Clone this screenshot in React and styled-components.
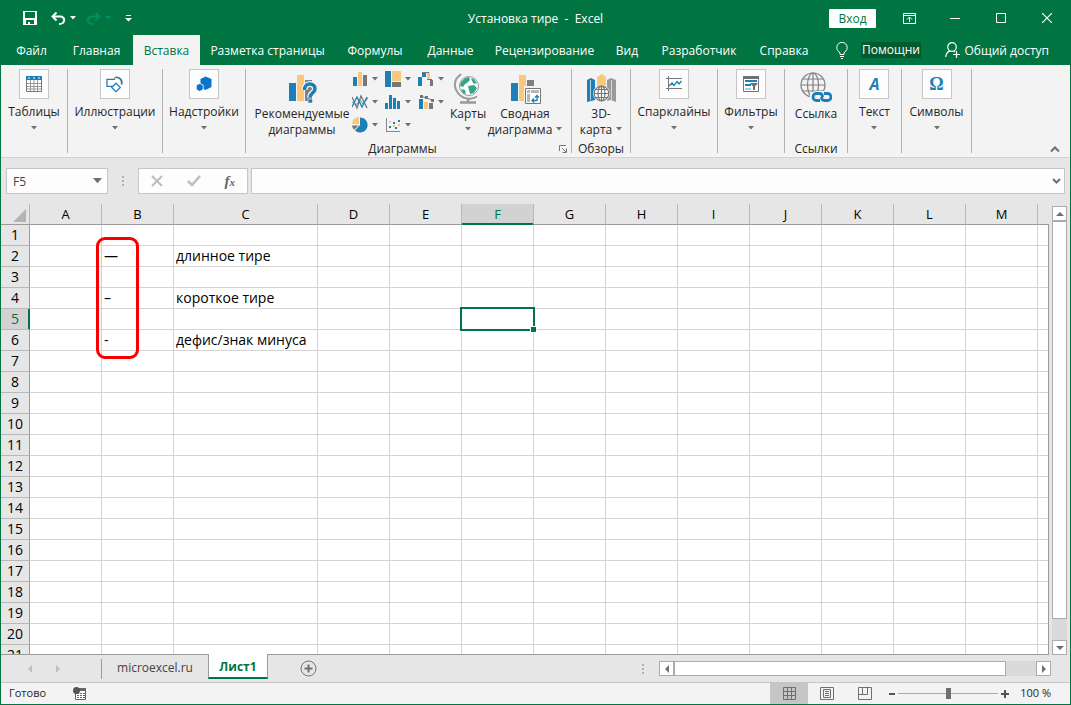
import { useState } from 'react'
import styled, { createGlobalStyle } from 'styled-components'

// Couleurs de l'application
const colors = {
   green: '#007542',
   darkGreen: '#045a2c',
   ribbon: '#f3f3f3',
   panel: '#e6e6e6',
   line: '#c6c6c6',
   grid: '#d4d4d4',
   edge: '#9b9b9b',
   icon: '#6f6f6f',
   blue: '#1d7fb9',
   orange: '#fbc77b',
   teal: '#35a58a',
   text: '#262626',
}

const GlobalStyle = createGlobalStyle`
   * {
      box-sizing: border-box;
   }
   body {
      margin: 0;
      font-family: 'Open Sans', 'Noto Sans', sans-serif;
      font-size: 12px;
      color: ${colors.text};
   }
   button, input {
      font: inherit;
      color: inherit;
      padding: 0;
      border: none;
      background: none;
   }
   svg {
      display: block;
      flex: none;
   }
`

// Fenêtre principale
const Window = styled.div`
   display: flex;
   flex-direction: column;
   height: 100vh;
   border: 1px solid ${colors.green};
   background-color: ${colors.panel};
   overflow: hidden;
`

// Barre de titre
const TitleBar = styled.header`
   display: grid;
   grid-template-columns: 1fr auto 1fr;
   align-items: center;
   flex: none;
   height: 34px;
   color: white;
   background-color: ${colors.green};
`

const QuickAccess = styled.div`
   display: flex;
   align-items: center;
   padding-left: 22px;
`

const QuickButton = styled.button`
   display: flex;
   align-items: center;
   gap: 4px;
   margin-right: ${({ $gap }) => $gap || 10}px;
   color: ${({ disabled }) => (disabled ? '#008e63' : 'white')};
`

const WindowTitle = styled.h1`
   margin: 0;
   font-size: 12px;
   font-weight: 400;
   white-space: pre;
`

const WindowControls = styled.div`
   display: flex;
   align-items: center;
   justify-content: flex-end;
`

const LoginButton = styled.button`
   width: 47px;
   height: 19px;
   margin-right: 10px;
   line-height: 19px;
   border-radius: 1px;
   color: ${colors.green};
   background-color: white;
`

const ControlButton = styled.button`
   display: flex;
   align-items: center;
   justify-content: center;
   width: 46px;
   height: 30px;
`

// Onglets du ruban
const TabBar = styled.nav`
   display: flex;
   align-items: stretch;
   flex: none;
   height: 30px;
   padding-left: 2px;
   color: white;
   background-color: ${colors.green};
`

const Tab = styled.button`
   flex: none;
   width: ${({ $width }) => $width}px;
   white-space: nowrap;
   color: ${({ $active }) => ($active ? colors.green : 'white')};
   background-color: ${({ $active }) => ($active ? colors.ribbon : 'transparent')};
`

const Helper = styled.button`
   display: flex;
   align-items: center;
   gap: 13px;
   margin-left: 15px;
   white-space: nowrap;
`

const HelperText = styled.span`
   height: 16px;
   line-height: 16px;
   padding: 0 1px;
   background-color: ${colors.darkGreen};
`

const Share = styled.button`
   display: flex;
   align-items: center;
   gap: 3px;
   margin-left: auto;
   padding-right: 21px;
   white-space: nowrap;
`

// Ruban
const RibbonBar = styled.section`
   display: flex;
   flex: none;
   height: 93px;
   border-bottom: 1px solid #d2d2d2;
   background-color: ${colors.ribbon};
`

const Group = styled.div`
   display: flex;
   flex-direction: column;
   flex: none;
   width: ${({ $width }) => $width}px;
   padding-right: 1px;
   position: relative;

   &::after {
      content: '';
      position: absolute;
      right: 0;
      top: 4px;
      bottom: 4px;
      width: 1px;
      background-color: #b1b1b1;
   }
`

const GroupBody = styled.div`
   display: flex;
   justify-content: center;
   flex: 1;
`

const GroupFooter = styled.div`
   display: flex;
   align-items: center;
   height: 16px;
   padding-right: ${({ $launcher }) => ($launcher ? 4 : 0)}px;
   line-height: 16px;
`

const GroupTitle = styled.span`
   flex: 1;
   text-align: center;
   white-space: nowrap;
`

const BoxButton = styled.button`
   display: flex;
   flex-direction: column;
   align-items: center;
   padding-top: 4px;
   line-height: 16px;
   white-space: nowrap;
`

const IconBox = styled.span`
   display: flex;
   align-items: center;
   justify-content: center;
   width: 30px;
   height: 30px;
   margin-bottom: 5px;
   border: 1px solid ${colors.line};
   background-color: #fdfdfd;
`

const BoxArrow = styled.span`
   margin-top: 6px;
`

const LargeButton = styled.button`
   display: flex;
   flex-direction: column;
   align-items: center;
   flex: none;
   width: ${({ $width }) => $width}px;
   padding-top: 7px;
   line-height: 16px;
   white-space: nowrap;

   svg:first-child {
      margin-bottom: 2px;
   }
`

const ArrowLine = styled.span`
   display: flex;
   align-items: center;
   gap: 4px;
   height: 16px;
`

const LetterIcon = styled.span`
   font-family: ${({ $serif }) => ($serif ? "'Liberation Serif', serif" : "'Open Sans', sans-serif")};
   font-size: ${({ $serif }) => ($serif ? 18 : 16)}px;
   font-weight: 700;
   font-style: ${({ $serif }) => ($serif ? 'normal' : 'italic')};
   color: ${colors.blue};
`

const Gallery = styled.div`
   display: grid;
   grid-template-columns: repeat(3, 33px);
   grid-auto-rows: 23px;
   padding-top: 2px;
`

const GalleryButton = styled.button`
   display: flex;
   align-items: center;
   gap: 4px;
`

const Collapse = styled.button`
   align-self: flex-end;
   margin-left: auto;
   padding: 0 10px 4px;
`

// Barre de formule
const FormulaBar = styled.section`
   display: flex;
   align-items: center;
   flex: none;
   height: 46px;
   padding: 0 5px;
`

const Field = styled.div`
   display: flex;
   align-items: center;
   height: 26px;
   border: 1px solid ${colors.line};
   background-color: #fdfdfd;
`

const NameField = styled(Field)`
   width: 102px;
   padding: 0 5px 0 6px;

   input {
      flex: 1;
      min-width: 0;
      color: #444;
      outline: none;
   }
`

const FormulaActions = styled(Field)`
   width: 110px;
   justify-content: space-between;
   padding: 0 12px;
   margin-right: 3px;
`

const FormulaField = styled(Field)`
   flex: 1;
   padding: 0 3px;

   input {
      flex: 1;
      min-width: 0;
      outline: none;
   }
`

const Fx = styled.span`
   font-family: 'Liberation Serif', serif;
   font-size: 15px;
   font-style: italic;
   font-weight: 700;
   color: #666;

   small {
      font-size: 11px;
   }
`

const Dots = styled.span`
   display: flex;
   flex-direction: column;
   gap: 2px;
   margin: 0 ${({ $side }) => $side}px;

   i {
      width: 2px;
      height: 2px;
      background-color: #b0b0b0;
   }
`

// Feuille de calcul
const SheetArea = styled.main`
   display: flex;
   flex: 1;
   min-height: 0;
`

const Viewport = styled.div`
   flex: 1;
   min-width: 0;
   position: relative;
   overflow: hidden;
   border-bottom: 1px solid ${colors.edge};

   &::after {
      content: '';
      position: absolute;
      top: 21px;
      right: 0;
      bottom: 0;
      width: 1px;
      background-color: ${colors.edge};
   }
`

const Table = styled.table`
   width: 0;
   table-layout: fixed;
   border-collapse: separate;
   border-spacing: 0;
   font-size: 14px;
   line-height: 20px;
   color: black;
   background-color: white;
`

const Col = styled.col`
   width: ${({ $width }) => $width}px;
`

const ColumnHead = styled.th`
   height: 21px;
   padding: 0;
   font-size: 13px;
   font-weight: 400;
   color: ${({ $active }) => ($active ? colors.green : 'black')};
   background-color: ${({ $active }) => ($active ? '#d2d2d2' : colors.panel)};
   border-right: 1px solid #b8b8b8;
   border-bottom: 1px solid ${({ $active }) => ($active ? colors.green : colors.edge)};
   box-shadow: ${({ $active }) => ($active ? `inset 0 -1px ${colors.green}` : 'none')};
`

const Corner = styled(ColumnHead)`
   svg {
      margin: 3px 3px 0 auto;
   }
`

const RowHead = styled.th`
   height: 21px;
   padding: 0;
   font-weight: 400;
   color: ${({ $active }) => ($active ? colors.green : 'black')};
   background-color: ${({ $active }) => ($active ? '#d2d2d2' : colors.panel)};
   border-right: 1px solid ${({ $active }) => ($active ? colors.green : colors.edge)};
   border-bottom: 1px solid #b8b8b8;
   box-shadow: ${({ $active }) => ($active ? `inset -1px 0 ${colors.green}` : 'none')};
`

const Cell = styled.td`
   position: relative;
   padding: 0 2px;
   white-space: nowrap;
   border-right: 1px solid ${colors.grid};
   border-bottom: 1px solid ${colors.grid};
`

// Cadre de la cellule sélectionnée
const Selection = styled.span`
   position: absolute;
   z-index: 1;
   top: -2px;
   left: -2px;
   right: -2px;
   bottom: -2px;
   border: 2px solid ${colors.green};

   &::after {
      content: '';
      position: absolute;
      right: -3px;
      bottom: -3px;
      width: 5px;
      height: 5px;
      background-color: ${colors.green};
      box-shadow: 0 0 0 1px white;
   }
`

// Cadre rouge autour des tirets
const Highlight = styled.div`
   position: absolute;
   left: 95px;
   top: 33px;
   width: 43px;
   height: 122px;
   border: 3px solid #f80000;
   border-radius: 9px;
   pointer-events: none;
`

const VerticalScroll = styled.div`
   display: flex;
   flex-direction: column;
   flex: none;
   width: 15px;
   margin: 2px 3px 0;
   background-color: #dadada;
`

const HorizontalScroll = styled.div`
   display: flex;
   width: 392px;
   height: 15px;
   background-color: #dadada;
`

const ScrollButton = styled.button`
   display: flex;
   align-items: center;
   justify-content: center;
   flex: none;
   width: 15px;
   height: 15px;
   border: 1px solid #ababab;
   background-color: white;
`

const Thumb = styled.div`
   flex: ${({ $size }) => $size};
   border: 1px solid #ababab;
   background-color: white;
`

const Track = styled.div`
   flex: ${({ $size }) => $size};
`

// Onglets des feuilles
const SheetBar = styled.nav`
   display: flex;
   align-items: center;
   flex: none;
   height: 27px;
   padding-right: 19px;
`

const SheetArrows = styled.div`
   display: flex;
   align-items: center;
   gap: 20px;
   width: 101px;
   height: 20px;
   padding-left: 25px;
   border-right: 1px solid ${colors.edge};
`

const SheetTab = styled.button`
   position: relative;
   align-self: flex-start;
   width: 106px;
   height: 24px;
   color: #444;
`

const ActiveSheetTab = styled(SheetTab)`
   width: 60px;
   height: 25px;
   margin-top: -1px;
   padding-top: 2px;
   font-weight: 700;
   color: ${colors.green};
   background-color: white;
   border: solid ${colors.edge};
   border-width: 0 1px;
   border-bottom: 2px solid ${colors.green};
`

const AddSheet = styled.button`
   margin-left: 32px;
   margin-right: auto;
`

// Barre d'état
const StatusBar = styled.footer`
   display: flex;
   align-items: center;
   flex: none;
   height: 22px;
   padding-left: 8px;
   padding-right: 19px;
   font-size: 11px;
   border-top: 1px solid ${colors.line};
   background-color: ${colors.ribbon};
`

const StatusText = styled.span`
   padding-bottom: 2px;
   white-space: nowrap;
`

const MacroButton = styled.button`
   margin-left: 27px;
   margin-right: auto;
`

const ViewButton = styled.button`
   display: flex;
   align-items: center;
   justify-content: center;
   width: 38px;
   height: 21px;
   background-color: ${({ $active }) => ($active ? colors.line : 'transparent')};
`

const ZoomControl = styled.div`
   display: flex;
   align-items: center;
   gap: 2px;
   padding-left: 4px;
`

const ZoomSlider = styled.input`
   appearance: none;
   width: 100px;
   height: 12px;
   margin: 0;
   background: linear-gradient(#ababab, #ababab) center / 100% 1px no-repeat;

   &::-webkit-slider-thumb {
      appearance: none;
      width: 5px;
      height: 11px;
      background-color: ${colors.icon};
   }
`

const ZoomValue = styled(StatusText)`
   width: 41px;
   text-align: right;
`

// Petite flèche des menus
function Arrow({ color = colors.icon, large }) {
   return (
      <svg width={large ? 9 : 6} height={large ? 6 : 4} viewBox="0 0 6 4">
         <path d="M0 0h6L3 3.5z" fill={color} />
      </svg>
   )
}

function ScrollArrow({ angle = 0, color = colors.icon }) {
   return (
      <svg width="8" height="8" viewBox="0 0 8 8">
         <path d="M0 6h8L4 2z" fill={color} transform={`rotate(${angle} 4 4)`} />
      </svg>
   )
}

function SaveIcon() {
   return (
      <svg width="14" height="14" viewBox="0 0 14 14">
         <path d="M0 0h14v14H0z M2 1v6h10V1z M3 9v4h2v-2h2v2h4V9z" fill="currentColor" fillRule="evenodd" />
      </svg>
   )
}

function UndoIcon({ flip }) {
   return (
      <svg width="15" height="13" viewBox="0 0 15 13">
         <g transform={flip ? 'matrix(-1 0 0 1 15 0)' : undefined} fill="none" stroke="currentColor" strokeWidth="2">
            <path d="M5.5 .5L1.5 4.5l4 4M1.5 4.5H9c6 0 5.500 7.500-1 7.500" />
         </g>
      </svg>
   )
}

function CustomizeIcon() {
   return (
      <svg width="7" height="7" viewBox="0 0 7 7">
         <path d="M1 0h5v1H1zM0 3h7L3.500 6.500z" fill="currentColor" />
      </svg>
   )
}

function RibbonDisplayIcon() {
   return (
      <svg width="13" height="11" viewBox="0 0 13 11" fill="none" stroke="white">
         <path d="M.5.5h12v10H.5zM.5 2.500h12M6.500 9V4.500M4 6.500l2.500-2.500L9 6.500" />
      </svg>
   )
}

function BulbIcon() {
   return (
      <svg width="12" height="17" viewBox="0 0 12 17" fill="none" stroke="white">
         <path d="M4 12.500V11C3 9.500.8 8.500.8 5.500a5.200 5.200 0 0 1 10.400 0C11.200 8.500 9 9.500 8 11v1.500zM4 14.500h4M5 16.500h2" />
      </svg>
   )
}

function ShareIcon() {
   return (
      <svg width="16" height="16" viewBox="0 0 16 16" fill="none" stroke="white" strokeWidth="1.200">
         <circle cx="7" cy="5" r="4.300" />
         <path d="M.7 15c.3-3 2-5.500 4.600-6.200M8.500 9.200l1.500.8M8 12.500h7M11.500 9v7" />
      </svg>
   )
}

function TableIcon() {
   return (
      <svg width="16" height="16" viewBox="0 0 16 16">
         <path d="M.5 1h15v14.500H.5z" fill="white" stroke="#777" />
         <path d="M0 0h16v4H0z" fill={colors.blue} />
         <path d="M2 2h2M7 2h2M12 2h2" stroke="white" />
         <path d="M1 7.500h14M1 10.500h14M1 13h14M4.500 4v11M8 4v11M11.500 4v11" stroke="#999" />
      </svg>
   )
}

function ShapesIcon() {
   return (
      <svg width="17" height="17" viewBox="0 0 17 17" fill="none" stroke={colors.blue} strokeWidth="1.300">
         <path d="M7 10.300H1V3.300h8" />
         <path d="M8 2.500a5 5 0 0 1 7.500 6.300" stroke="#888" />
         <path d="M9.800 1.500a5 5 0 0 1 5.500 6.500" />
         <path d="M10 7.200l4.300 4.200-4.300 4.200-4.300-4.200z" fill="white" />
      </svg>
   )
}

function AddinsIcon() {
   return (
      <svg width="16" height="16" viewBox="0 0 16 16" fill="#0a74cc">
         <path d="M9.500.5L15.500 3v8L9.500 14 4.500 11.500V3z" />
         <path d="M3.700 7.500L7.200 9v4.500L3.700 15.500.3 13.500V9z" stroke="white" strokeWidth=".8" />
      </svg>
   )
}

function RecommendedIcon() {
   return (
      <svg width="32" height="32" viewBox="0 0 32 32">
         <path d="M3 11h7v18H3z" fill={colors.blue} />
         <path d="M11 3h7v26h-7z" fill={colors.orange} />
         <path d="M19 8h7v21h-7z" fill="#808080" />
         <path d="M18.500 18c0-8 10.500-7.500 10.500-1.300 0 4.300-5 4.300-5 8.800" fill="none" stroke={colors.ribbon} strokeWidth="6" />
         <path d="M18.500 18c0-8 10.500-7.500 10.500-1.300 0 4.300-5 4.300-5 8.800" fill="none" stroke={colors.blue} strokeWidth="3.500" />
         <path d="M22 27h4.500v4H22z" fill={colors.blue} stroke={colors.ribbon} strokeWidth=".6" />
      </svg>
   )
}

function GlobeStandIcon() {
   return (
      <svg width="32" height="32" viewBox="0 0 32 32">
         <circle cx="17" cy="14" r="9.500" fill="white" stroke="#999" />
         <path d="M9 10l4-4 4-1 1 3-3 3-2 1-2 3-3-1zM19 6l3 1 3 4-3 1-2-3zM16 14l6-1 3 3-3 5-4 1-1-4zM9 17l4 1 1 4-3-1z" fill={colors.teal} />
         <path d="M9 2L4.500 6.500C0 15 6 25 15 26.500c4 .8 7 0 10-2" fill="none" stroke="#999" strokeWidth="2" />
         <path d="M16 26v4M8 30.500h16" stroke="#999" strokeWidth="2.500" />
      </svg>
   )
}

function PivotChartIcon() {
   return (
      <svg width="32" height="32" viewBox="0 0 32 32">
         <path d="M2 11h7v18H2z" fill={colors.blue} />
         <path d="M10 3h7v26h-7z" fill={colors.orange} />
         <path d="M18 8h7v8h-7z" fill="#808080" />
         <path d="M15 14h18v18H15z" fill={colors.ribbon} />
         <path d="M16.500 16.500h15v15h-15z" fill="white" stroke="#777" />
         <path d="M18 18h3v3h-3zM22 18h8v3h-8zM18 22h3v8h-3z" fill="#b5b5b5" />
         <path d="M28 24v4.500h-5M26 25.500l2-2 2 2M25 26.500l-2 2 2 2" fill="none" stroke={colors.blue} strokeWidth="1.300" />
      </svg>
   )
}

function MapIcon() {
   return (
      <svg width="32" height="32" viewBox="0 0 32 32">
         <path d="M2 8l4-2 4 2v20l-4 1-4 1z" fill={colors.blue} />
         <path d="M12 5l5-3 4 3v20h-9z" fill={colors.orange} />
         <path d="M22 8l4-2 5 2v22l-5-2-4 1z" fill="#999" />
         <path d="M5.500 8v20M26.500 8v20" stroke={colors.ribbon} strokeWidth=".7" />
         <circle cx="16.500" cy="21.500" r="8.500" fill={colors.ribbon} />
         <g fill="none" stroke="#777" strokeWidth="1.200">
            <circle cx="16.500" cy="21.500" r="7.300" fill="white" />
            <ellipse cx="16.500" cy="21.500" rx="3.500" ry="7.300" />
            <path d="M9 21.500h15M10.500 17.500h12M10.500 25.500h12M16.500 14v15" />
         </g>
      </svg>
   )
}

function SparklineIcon() {
   return (
      <svg width="16" height="16" viewBox="0 0 16 16" fill="none">
         <path d="M2.500 0v15M0 2.500h16M0 12.500h16" stroke="#777" />
         <path d="M3 10l3-3 2 2.500L11 5.500l2 2.500 2.500-3" stroke={colors.blue} strokeWidth="1.300" />
      </svg>
   )
}

function FilterIcon() {
   return (
      <svg width="16" height="16" viewBox="0 0 16 16">
         <path d="M.5.5h15v15H.5z" fill="white" stroke="#777" />
         <path d="M0 0h16v3H0z" fill="#707070" />
         <path d="M2 5h12" stroke={colors.blue} strokeWidth="2" />
         <path d="M2 9h6" stroke={colors.blue} strokeWidth="2" />
         <path d="M2 13h6" stroke="#a9cfe6" strokeWidth="2" />
         <path d="M7 7h8l-3 3.500V14h-2v-3.500z" fill="#707070" />
      </svg>
   )
}

function LinkIcon() {
   return (
      <svg width="32" height="32" viewBox="0 0 32 32" fill="none">
         <g stroke="#808080" strokeWidth="1.200">
            <circle cx="13" cy="13" r="12" />
            <ellipse cx="13" cy="13" rx="5.500" ry="12" />
            <path d="M1 13h24M13 1v24M3 7h20M3 19h20" />
         </g>
         <path d="M16 22h13a3 3 0 0 1 0 7H16a3 3 0 0 1 0-7z" stroke={colors.ribbon} strokeWidth="6" />
         <path d="M20 28.500h-3.500a3.500 3.500 0 0 1 0-7h3c2 0 3 1.500 3 3.500M24 21.500h3.500a3.500 3.500 0 0 1 0 7h-3c-2 0-3-1.500-3-3.500" stroke={colors.blue} strokeWidth="2.800" />
      </svg>
   )
}

// Icônes de la galerie de diagrammes
const galleryIcons = {
   column: (
      <>
         <path d="M1 6h4v9H1z" fill={colors.blue} />
         <path d="M6 1h4v14H6z" fill={colors.orange} />
         <path d="M11 4h4v11h-4z" fill="#777" />
      </>
   ),
   hierarchy: (
      <>
         <path d="M0 0h6v16H0z" fill={colors.blue} />
         <path d="M7 0h9v10H7z" fill={colors.orange} />
         <path d="M7 11h9v5H7z" fill="#777" />
      </>
   ),
   waterfall: (
      <>
         <path d="M0 6h4v9H0zM4 1h4v5H4z" fill={colors.blue} />
         <path d="M9 1h3v7H9z" fill={colors.orange} />
         <path d="M12 9h3v6h-3z" fill="#777" />
         <path d="M4 1.500h7M9 8.500h5" stroke="#777" />
      </>
   ),
   line: (
      <g fill="none" strokeWidth="1.300">
         <path d="M0 13L5 3l5 10 5-10" stroke={colors.blue} />
         <path d="M0 3l5 11L9 2l6 12" stroke="#777" />
         <path d="M0 8l4 3 4-5 3 4 5-6" stroke={colors.blue} strokeWidth=".8" />
      </g>
   ),
   statistic: <path d="M0 9h3v6H0zM4 1h3v14H4zM8 4h3v11H8zM12 7h3v8h-3z" fill={colors.blue} />,
   combo: (
      <>
         <path d="M1 5h4v10H1z" fill={colors.blue} />
         <path d="M6 8h4v7H6z" fill={colors.orange} />
         <path d="M11 9h4v6h-4z" fill="#777" />
         <path d="M3 2l5 2 6 2" stroke="#777" fill="none" />
         <path d="M2 1h3v3H2zM7 2h3v3H7zM13 5h3v3h-3z" fill="#777" />
      </>
   ),
   pie: (
      <>
         <path d="M8 8V.5a7.500 7.500 0 1 1-5 13z" fill={colors.blue} />
         <path d="M7 7H0A7 7 0 0 1 7 0z" fill={colors.orange} />
         <path d="M6.500 8.500l-4.300 4.300A7 7 0 0 1 0 8.500z" fill="#777" />
      </>
   ),
   scatter: (
      <>
         <path d="M1.500 1v14M1 14.500h14" stroke="#888" fill="none" />
         <path d="M4 9h2v2H4zM8 5h2v2H8zM10 10h2v2h-2zM13 3h2v2h-2z" fill={colors.blue} />
         <path d="M4 4h2v2H4zM8 8h2v2H8zM13 7h2v2h-2z" fill={colors.orange} />
      </>
   ),
}

const ribbonTabs = [
   ['Файл', 57],
   ['Главная', 73],
   ['Вставка', 67],
   ['Разметка страницы', 135],
   ['Формулы', 80],
   ['Данные', 71],
   ['Рецензирование', 117],
   ['Вид', 48],
   ['Разработчик', 96],
   ['Справка', 74],
]

const galleryItems = [
   ['column', 'Гистограмма'],
   ['hierarchy', 'Иерархическая'],
   ['waterfall', 'Каскадная'],
   ['line', 'График'],
   ['statistic', 'Статистическая'],
   ['combo', 'Комбинированная'],
   ['pie', 'Круговая'],
   ['scatter', 'Точечная'],
]

// Colonnes, lignes et contenu de la feuille
const columns = [...'ABCDEFGHIJKLM', ''].map((name) => ({
   name,
   width: name === 'C' ? 144 : 72,
}))
const rows = Array.from({ length: 21 }, (_, i) => i + 1)
const cells = {
   B2: '—',
   C2: 'длинное тире',
   B4: '–',
   C4: 'короткое тире',
   B6: '-',
   C6: 'дефис/знак минуса',
}

function BoxGroup({ width, label, children }) {
   return (
      <Group $width={width}>
         <GroupBody>
            <BoxButton>
               <IconBox>{children}</IconBox>
               {label}
               <BoxArrow>
                  <Arrow />
               </BoxArrow>
            </BoxButton>
         </GroupBody>
      </Group>
   )
}

function Ribbon() {
   return (
      <RibbonBar>
         <BoxGroup width={67} label="Таблицы">
            <TableIcon />
         </BoxGroup>
         <BoxGroup width={95} label="Иллюстрации">
            <ShapesIcon />
         </BoxGroup>
         <BoxGroup width={83} label="Надстройки">
            <AddinsIcon />
         </BoxGroup>
         <Group $width={326}>
            <GroupBody>
               <LargeButton $width={100}>
                  <RecommendedIcon />
                  <span>Рекомендуемые</span>
                  <span>диаграммы</span>
               </LargeButton>
               <Gallery>
                  {galleryItems.map(([icon, label]) => (
                     <GalleryButton key={icon} aria-label={label}>
                        <svg width="16" height="16" viewBox="0 0 16 16">
                           {galleryIcons[icon]}
                        </svg>
                        <Arrow />
                     </GalleryButton>
                  ))}
               </Gallery>
               <LargeButton $width={34}>
                  <GlobeStandIcon />
                  <span>Карты</span>
                  <ArrowLine>
                     <Arrow />
                  </ArrowLine>
               </LargeButton>
               <LargeButton $width={80}>
                  <PivotChartIcon />
                  <span>Сводная</span>
                  <ArrowLine>
                     диаграмма <Arrow />
                  </ArrowLine>
               </LargeButton>
            </GroupBody>
            <GroupFooter $launcher>
               <GroupTitle>Диаграммы</GroupTitle>
               <button aria-label="Параметры диаграмм">
                  <svg width="8" height="8" viewBox="0 0 8 8" fill="none" stroke="#777">
                     <path d="M.5 6V.5H7M3 3l4 4M7.500 3.500v4h-4" />
                  </svg>
               </button>
            </GroupFooter>
         </Group>
         <Group $width={59}>
            <GroupBody>
               <LargeButton $width={58}>
                  <MapIcon />
                  <span>3D-</span>
                  <ArrowLine>
                     карта <Arrow />
                  </ArrowLine>
               </LargeButton>
            </GroupBody>
            <GroupFooter>
               <GroupTitle>Обзоры</GroupTitle>
            </GroupFooter>
         </Group>
         <BoxGroup width={87} label="Спарклайны">
            <SparklineIcon />
         </BoxGroup>
         <BoxGroup width={67} label="Фильтры">
            <FilterIcon />
         </BoxGroup>
         <Group $width={63}>
            <GroupBody>
               <LargeButton $width={62}>
                  <LinkIcon />
                  <span>Ссылка</span>
               </LargeButton>
            </GroupBody>
            <GroupFooter>
               <GroupTitle>Ссылки</GroupTitle>
            </GroupFooter>
         </Group>
         <BoxGroup width={54} label="Текст">
            <LetterIcon>A</LetterIcon>
         </BoxGroup>
         <BoxGroup width={70} label="Символы">
            <LetterIcon $serif>Ω</LetterIcon>
         </BoxGroup>
         <Collapse aria-label="Свернуть ленту">
            <svg width="10" height="7" viewBox="0 0 10 7" fill="none" stroke={colors.icon} strokeWidth="2">
               <path d="M1 5.500l4-4 4 4" />
            </svg>
         </Collapse>
      </RibbonBar>
   )
}

function Sheet() {
   return (
      <SheetArea>
         <Viewport>
            <Table>
               <colgroup>
                  <Col $width={29} />
                  {columns.map(({ name, width }) => (
                     <Col key={name} $width={width} />
                  ))}
               </colgroup>
               <thead>
                  <tr>
                     <Corner>
                        <svg width="13" height="13" viewBox="0 0 13 13">
                           <path d="M13 0v13H0z" fill="#b4b4b4" />
                        </svg>
                     </Corner>
                     {columns.map(({ name }) => (
                        <ColumnHead key={name} scope="col" $active={name === 'F'}>
                           {name}
                        </ColumnHead>
                     ))}
                  </tr>
               </thead>
               <tbody>
                  {rows.map((row) => (
                     <tr key={row}>
                        <RowHead scope="row" $active={row === 5}>
                           {row}
                        </RowHead>
                        {columns.map(({ name }) => (
                           <Cell key={name}>
                              {cells[name + row]}
                              {name + row === 'F5' && <Selection />}
                           </Cell>
                        ))}
                     </tr>
                  ))}
               </tbody>
            </Table>
            <Highlight />
         </Viewport>
         <VerticalScroll>
            <ScrollButton aria-label="Вверх">
               <ScrollArrow />
            </ScrollButton>
            <Thumb $size={398} />
            <Track $size={21} />
            <ScrollButton aria-label="Вниз">
               <ScrollArrow angle={180} />
            </ScrollButton>
         </VerticalScroll>
      </SheetArea>
   )
}

function App() {
   const [zoom, setZoom] = useState(100)
   const [formula, setFormula] = useState('')

   return (
      <Window>
         <GlobalStyle />
         <TitleBar>
            <QuickAccess>
               <QuickButton $gap={14} aria-label="Сохранить">
                  <SaveIcon />
               </QuickButton>
               <QuickButton aria-label="Отменить">
                  <UndoIcon />
                  <Arrow color="currentColor" />
               </QuickButton>
               <QuickButton $gap={14} disabled aria-label="Вернуть">
                  <UndoIcon flip />
                  <Arrow color="currentColor" />
               </QuickButton>
               <QuickButton aria-label="Настройка панели">
                  <CustomizeIcon />
               </QuickButton>
            </QuickAccess>
            <WindowTitle>{'Установка тире  -  Excel'}</WindowTitle>
            <WindowControls>
               <LoginButton>Вход</LoginButton>
               <ControlButton aria-label="Параметры ленты">
                  <RibbonDisplayIcon />
               </ControlButton>
               <ControlButton aria-label="Свернуть">
                  <svg width="10" height="10" viewBox="0 0 10 10" stroke="white">
                     <path d="M0 5.500h10" />
                  </svg>
               </ControlButton>
               <ControlButton aria-label="Развернуть">
                  <svg width="10" height="10" viewBox="0 0 10 10" fill="none" stroke="white">
                     <path d="M.5.5h9v9h-9z" />
                  </svg>
               </ControlButton>
               <ControlButton aria-label="Закрыть">
                  <svg width="10" height="10" viewBox="0 0 10 10" stroke="white" strokeWidth="1.200">
                     <path d="M0 0l10 10M10 0L0 10" />
                  </svg>
               </ControlButton>
            </WindowControls>
         </TitleBar>
         <TabBar>
            {ribbonTabs.map(([name, width]) => (
               <Tab key={name} $width={width} $active={name === 'Вставка'}>
                  {name}
               </Tab>
            ))}
            <Helper>
               <BulbIcon />
               <HelperText>Помощни</HelperText>
            </Helper>
            <Share>
               <ShareIcon />
               Общий доступ
            </Share>
         </TabBar>
         <Ribbon />
         <FormulaBar>
            <NameField>
               <input aria-label="Имя ячейки" defaultValue="F5" />
               <button aria-label="Список имён">
                  <Arrow large />
               </button>
            </NameField>
            <Dots $side={14}>
               <i />
               <i />
               <i />
            </Dots>
            <FormulaActions>
               <button aria-label="Отмена">
                  <svg width="12" height="12" viewBox="0 0 12 12" stroke="#bdbdbd" strokeWidth="2">
                     <path d="M1 1l10 10M11 1L1 11" />
                  </svg>
               </button>
               <button aria-label="Ввод">
                  <svg width="14" height="12" viewBox="0 0 14 12" fill="none" stroke="#bdbdbd" strokeWidth="2.500">
                     <path d="M1 6l4 4 8-9" />
                  </svg>
               </button>
               <button aria-label="Вставить функцию">
                  <Fx>
                     f<small>x</small>
                  </Fx>
               </button>
            </FormulaActions>
            <FormulaField>
               <input aria-label="Строка формул" value={formula} onChange={(e) => setFormula(e.target.value)} />
               <button aria-label="Развернуть строку формул">
                  <svg width="9" height="6" viewBox="0 0 9 6" fill="none" stroke={colors.icon} strokeWidth="2">
                     <path d="M1 1l3.500 3.500L8 1" />
                  </svg>
               </button>
            </FormulaField>
         </FormulaBar>
         <Sheet />
         <SheetBar>
            <SheetArrows>
               <button aria-label="Предыдущий лист">
                  <ScrollArrow angle={-90} color="#bdbdbd" />
               </button>
               <button aria-label="Следующий лист">
                  <ScrollArrow angle={90} color="#bdbdbd" />
               </button>
            </SheetArrows>
            <SheetTab>microexcel.ru</SheetTab>
            <ActiveSheetTab>Лист1</ActiveSheetTab>
            <AddSheet aria-label="Новый лист">
               <svg width="17" height="17" viewBox="0 0 17 17" fill="none" stroke={colors.icon}>
                  <circle cx="8.500" cy="8.500" r="7.500" />
                  <path d="M4.500 8.500h8M8.500 4.500v8" strokeWidth="2" />
               </svg>
            </AddSheet>
            <Dots $side={15}>
               <i />
               <i />
               <i />
            </Dots>
            <HorizontalScroll>
               <ScrollButton aria-label="Влево">
                  <ScrollArrow angle={-90} />
               </ScrollButton>
               <Thumb $size={332} />
               <Track $size={30} />
               <ScrollButton aria-label="Вправо">
                  <ScrollArrow angle={90} />
               </ScrollButton>
            </HorizontalScroll>
         </SheetBar>
         <StatusBar>
            <StatusText>Готово</StatusText>
            <MacroButton aria-label="Запись макроса">
               <svg width="14" height="13" viewBox="0 0 14 13">
                  <path d="M2.500 5v7.500h10V1.500H6" fill="white" stroke="#666" />
                  <path d="M6 1h7v3H6z" fill="#666" />
                  <path d="M4 6.500h8M4 8.500h8M4 10.500h8" stroke="#666" strokeDasharray="2 1" />
                  <circle cx="3.500" cy="3.500" r="3.500" fill="#555" />
               </svg>
            </MacroButton>
            <ViewButton $active aria-label="Обычный">
               <svg width="13" height="13" viewBox="0 0 13 13" fill="none" stroke={colors.icon}>
                  <path d="M.5.5h12v12H.5zM.5 4.500h12M.5 8.500h12M4.500.5v12M8.500.5v12" />
               </svg>
            </ViewButton>
            <ViewButton aria-label="Разметка страницы">
               <svg width="14" height="13" viewBox="0 0 14 13" fill="none" stroke={colors.icon}>
                  <path d="M.5.5h13v12H.5zM3.500 2.500h7v8h-7zM5 4.500h4M5 6.500h4M5 8.500h4" />
               </svg>
            </ViewButton>
            <ViewButton aria-label="Страничный">
               <svg width="14" height="13" viewBox="0 0 14 13" fill="none" stroke={colors.icon}>
                  <path d="M.5.5h13v12H.5zM.5 7.500h9v-7M4.500.5v7" />
               </svg>
            </ViewButton>
            <ZoomControl>
               <button aria-label="Уменьшить">
                  <svg width="8" height="8" viewBox="0 0 8 8" stroke="#555" strokeWidth="2">
                     <path d="M1 4h6" />
                  </svg>
               </button>
               <ZoomSlider
                  type="range"
                  min="0"
                  max="200"
                  aria-label="Масштаб"
                  value={zoom}
                  onChange={(e) => setZoom(Number(e.target.value))}
               />
               <button aria-label="Увеличить">
                  <svg width="10" height="8" viewBox="0 0 10 8" stroke="#555" strokeWidth="2">
                     <path d="M1 4h8M5 0v8" />
                  </svg>
               </button>
            </ZoomControl>
            <ZoomValue>{zoom} %</ZoomValue>
         </StatusBar>
      </Window>
   )
}

export default App
